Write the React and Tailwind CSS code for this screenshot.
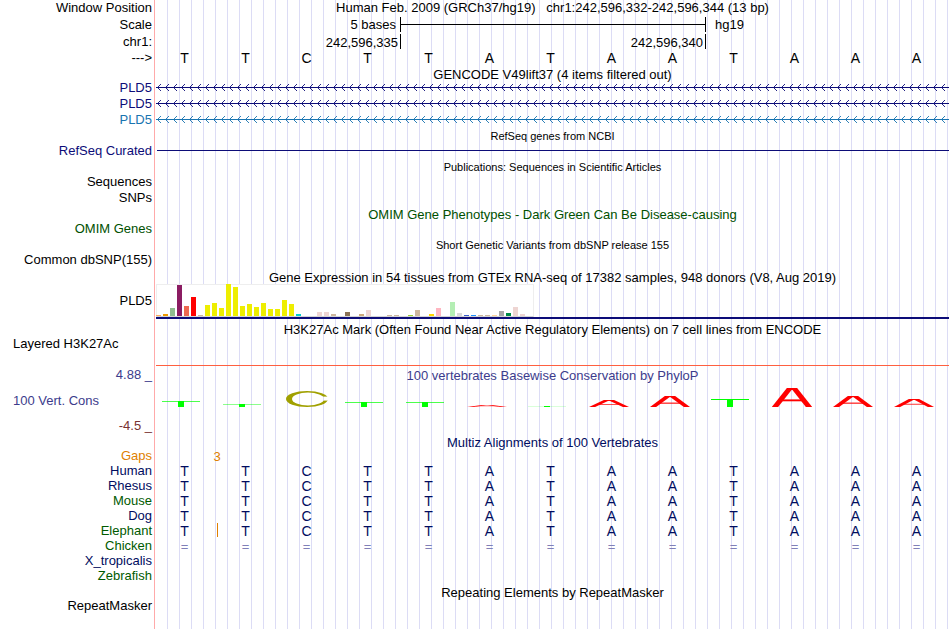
const BASES = 'TTCTTATAATAAA'.split('')

const SPECIES = [
  { name: 'Human', tone: 'text-[#000c60]', row: 'bases' },
  { name: 'Rhesus', tone: 'text-[#000c60]', row: 'bases' },
  { name: 'Mouse', tone: 'text-[#005a00]', row: 'bases' },
  { name: 'Dog', tone: 'text-[#000c60]', row: 'bases' },
  { name: 'Elephant', tone: 'text-[#005a00]', row: 'bases', gap: true },
  { name: 'Chicken', tone: 'text-[#005a00]', row: 'same' },
  { name: 'X_tropicalis', tone: 'text-[#000c60]' },
  { name: 'Zebrafish', tone: 'text-[#005a00]' },
]

// [height, colour] per tissue
const Y = '#eeee00'
const TISSUES = [
  [1, '#ffaa56'], [2, '#ee9a00'], [8, '#8fbc8f'], [31, '#8b1c62'], [10, '#ee6a50'], [19, '#ff0000'],
  [1, '#cdb79e'], [11, Y], [13, Y], [8, Y], [32, Y], [29, Y], [10, Y], [12, Y], [9, Y], [13, Y], [7, Y],
  [7, Y], [16, Y], [12, Y], [2, '#00cdcd'], [0, Y], [0, Y], [4, '#eed5d2'], [4, '#eed5d2'], [2, '#cdb79e'],
  [0, Y], [4, '#8b7355'], [0, Y], [2, '#cdaa7d'], [6, '#eed5d2'], [0, Y], [0, Y], [1, '#cdb79e'],
  [1, '#cdb79e'], [0, Y], [1, '#9acd32'], [6, '#cdb79e'], [0, Y], [2, '#ffd700'], [8, '#ffb6c1'], [0, Y],
  [14, '#b4eeb4'], [3, '#d9d9d9'], [1, '#3a5fcd'], [1, '#1e90ff'], [1, '#cdb79e'], [1, '#cdb79e'],
  [1, '#ffd39b'], [5, '#a6a6a6'], [3, '#008b45'], [9, '#eed5d2'], [2, '#eed5d2'], [0, Y],
]

const SCORES = [6, 3, 16, 5, 5, 2, 1, 7, 11, 8, 19, 11, 8]

function Row({ label, tone = 'text-black', height = 'h-4', children }) {
  return (
    <div className={`flex ${height}`}>
      <div className={`flex w-[154px] shrink-0 items-center justify-end pr-0.5 pb-0.5 whitespace-pre ${tone}`}>{label}</div>
      <div className="min-w-0 flex-1">{children}</div>
    </div>
  )
}

function Title({ tone = 'text-black', height = 'h-[15px]', size = 'text-[13px]', children }) {
  return (
    <Row height={height}>
      <h2 className={`flex h-full items-center justify-center pt-0.5 pr-px pl-0.5 whitespace-pre ${size} ${tone}`}>
        {children}
      </h2>
    </Row>
  )
}

function Letters({ items, className }) {
  return (
    <div className={`mr-[3px] grid h-full grid-cols-13 items-center text-center ${className}`}>
      {items.map((b, i) => (
        <span key={i}>{b}</span>
      ))}
    </div>
  )
}

function Transcript({ id, color }) {
  return (
    <div className="h-full pr-px pl-0.5">
      <svg className="block h-4 w-full" aria-hidden="true">
        <defs>
          <pattern id={id} width="8" height="16" x="1" patternUnits="userSpaceOnUse">
            <path d="M4 4L0.5 7.5L4 11" fill="none" stroke={color} strokeWidth="0.9" />
          </pattern>
        </defs>
        <rect width="100%" height="16" fill={`url(#${id})`} />
        <rect y="7" width="100%" height="1" fill={color} />
      </svg>
    </div>
  )
}

function Expression() {
  return (
    <div className="flex h-full flex-col pr-px pl-0.5">
      <div className="flex h-[33px] w-[378px] items-end border border-[#eeeeee] border-b-[#d4d4d4] bg-white">
        <div className="-mt-px -ml-px flex h-8 items-end gap-0.5">
          {TISSUES.map(([h, color], i) => (
            <div key={i} className="w-[5px] shrink-0" style={{ height: h, backgroundColor: color }} />
          ))}
        </div>
      </div>
      <div className="h-0.5 bg-[#0c0c78]" />
    </div>
  )
}

// one mark of the conservation logo, stretched to its score
function Mark({ base, score }) {
  if (base === 'T') {
    return (
      <svg className="block w-10" height={score} aria-hidden="true">
        <rect width="38" height="1" fill="#00ff00" opacity={score > 6 ? 1 : score > 3 ? 0.7 : score > 1 ? 0.45 : 0.15} />
        <rect x="16" width="6" height={score} fill="#00ff00" />
      </svg>
    )
  }
  if (base === 'C') {
    return (
      <svg viewBox="0 0 42 20" preserveAspectRatio="none" className="block w-[42px]" height={score} aria-hidden="true">
        <mask id="ring">
          <rect width="42" height="20" fill="white" />
          <ellipse cx="22" cy="10" rx="16" ry="8" fill="black" />
          <rect x="30" y="7" width="12" height="5" fill="black" />
        </mask>
        <ellipse cx="21" cy="10" rx="21" ry="10" fill="#a0a000" mask="url(#ring)" />
      </svg>
    )
  }
  return (
    <svg viewBox="0 0 40 20" preserveAspectRatio="none" className="block w-10" height={score} aria-hidden="true">
      <g stroke="#ff0000" fill="none">
        <line x1="0" y1="24" x2="21" y2="-4" strokeWidth="5" />
        <line x1="19" y1="-4" x2="40" y2="24" strokeWidth="5" />
        <line x1="16" y1="1" x2="24" y2="1" strokeWidth="2" />
        <line x1="9" y1="13" x2="31" y2="13" strokeWidth="2" />
      </g>
    </svg>
  )
}

function Conservation() {
  return (
    <div className="mr-[3px] grid h-6 grid-cols-13 items-end">
      {BASES.map((b, i) => (
        <div key={i} className={b === 'C' ? 'pl-2.5' : 'pl-2'}>
          <Mark base={b} score={SCORES[i]} />
        </div>
      ))}
    </div>
  )
}

export default function App() {
  return (
    <main className="relative min-h-screen overflow-hidden bg-white font-['Liberation_Sans',Arial,sans-serif] text-[13px] leading-[15px] text-black">
      <div className="absolute inset-y-0 right-px left-[154px] border-l border-[#ffaaaa] pl-3">
        <div className="h-full bg-[repeating-linear-gradient(to_right,#dcdcf5_0px,#dcdcf5_1px,transparent_1px,transparent_12px)]" />
      </div>

      <div className="relative">
        <Row label="Window Position" height="h-[17px]">
          <h1 className="pr-px pl-0.5 text-center whitespace-pre">
            {'Human Feb. 2009 (GRCh37/hg19)   chr1:242,596,332-242,596,344 (13 bp)'}
          </h1>
        </Row>
        <Row label="Scale" height="h-[17px]">
          <div className="grid h-full grid-cols-[4fr_5fr_4fr] items-center pr-px pb-0.5 pl-0.5">
            <span className="pr-1 text-right">5 bases</span>
            <div className="-mr-px flex h-[15px] items-center self-start border-x border-black">
              <div className="h-px w-full bg-black" />
            </div>
            <span className="pl-2.5">hg19</span>
          </div>
        </Row>
        <Row label="chr1:" height="h-[17px]">
          <div className="grid h-full grid-cols-[4fr_5fr_4fr] pr-px pl-0.5 text-right">
            <span className="-mr-px h-[15px] border-r border-black pt-px pr-0.5">242,596,335</span>
            <span className="-mr-px h-[15px] border-r border-black pt-px pr-0.5">242,596,340</span>
          </div>
        </Row>
        <Row label="--->" height="h-[15px]">
          <div className="h-3">
            <Letters items={BASES} className="pb-0.5 text-sm leading-[15px]" />
          </div>
        </Row>

        <Title height="h-3.5">GENCODE V49lift37 (4 items filtered out)</Title>
        <Row label="PLD5" tone="text-[#0c0c78]">
          <Transcript id="tx1" color="#0c0c78" />
        </Row>
        <Row label="PLD5" tone="text-[#0c0c78]">
          <Transcript id="tx2" color="#0c0c78" />
        </Row>
        <Row label="PLD5" tone="text-[#1874b0]">
          <Transcript id="tx3" color="#1874b0" />
        </Row>

        <Title size="text-[11px]">RefSeq genes from NCBI</Title>
        <Row label="RefSeq Curated" tone="text-[#0c0c78]">
          <div className="flex h-[15px] items-center pr-px pl-[3px]">
            <div className="h-px w-full bg-[#0c0c78]" />
          </div>
        </Row>

        <Title size="text-[11px]">Publications: Sequences in Scientific Articles</Title>
        <Row label="Sequences" />
        <Row label="SNPs" />

        <Title tone="text-[#005000]">OMIM Gene Phenotypes - Dark Green Can Be Disease-causing</Title>
        <Row label="OMIM Genes" tone="text-[#005000]" />

        <Title size="text-[11px]">Short Genetic Variants from dbSNP release 155</Title>
        <Row label="Common dbSNP(155)" />

        <Title height="h-4">Gene Expression in 54 tissues from GTEx RNA-seq of 17382 samples, 948 donors (V8, Aug 2019)</Title>
        <Row label="PLD5" height="h-[35px]">
          <Expression />
        </Row>

        <div className="pt-0.5 pb-3.5">
          <Title>H3K27Ac Mark (Often Found Near Active Regulatory Elements) on 7 cell lines from ENCODE</Title>
          <div className="flex h-[15px] items-center pl-[13px]">Layered H3K27Ac</div>
        </div>

        <div className="flex">
          <div className="flex w-[154px] shrink-0 flex-col justify-between pt-0.5 text-[#3c3c8c]">
            <span className="pr-0.5 text-right">4.88 _</span>
            <span className="pl-[13px]">100 Vert. Cons</span>
            <span className="pr-0.5 text-right text-[#783232]">-4.5 _</span>
          </div>
          <div className="min-w-0 flex-1 pb-[26px]">
            <div className="mr-px ml-0.5 h-px bg-[#ff6040]" />
            <h2 className="pt-0.5 pr-px pl-0.5 text-center text-[#3c3c8c]">
              100 vertebrates Basewise Conservation by PhyloP
            </h2>
            <Conservation />
          </div>
        </div>

        <Title height="h-4" tone="text-[#000c60]">Multiz Alignments of 100 Vertebrates</Title>
        <Row label="Gaps" tone="text-[#e08000]" height="h-[15px]">
          <div className="grid h-full grid-cols-13 items-center pr-px pb-0.5 pl-0.5">
            <span className="col-span-2 text-center text-[#e08000]">3</span>
          </div>
        </Row>
        {SPECIES.map((s) => (
          <Row key={s.name} label={s.name} tone={s.tone} height="h-[15px]">
            <div className="relative h-full">
              {s.row === 'bases' && <Letters items={BASES} className="pb-0.5 text-sm leading-[15px] text-[#000c60]" />}
              {s.row === 'same' && <Letters items={BASES.map(() => '=')} className="text-[#8080b8]" />}
              {s.gap && (
                <div className="absolute inset-0 grid grid-cols-13 pr-px pl-0.5">
                  <div className="-mt-px col-span-2 h-3.5 w-px justify-self-center bg-[#e08000]" />
                </div>
              )}
            </div>
          </Row>
        ))}

        <Title height="h-3.5">Repeating Elements by RepeatMasker</Title>
        <Row label="RepeatMasker" />
      </div>
    </main>
  )
}
